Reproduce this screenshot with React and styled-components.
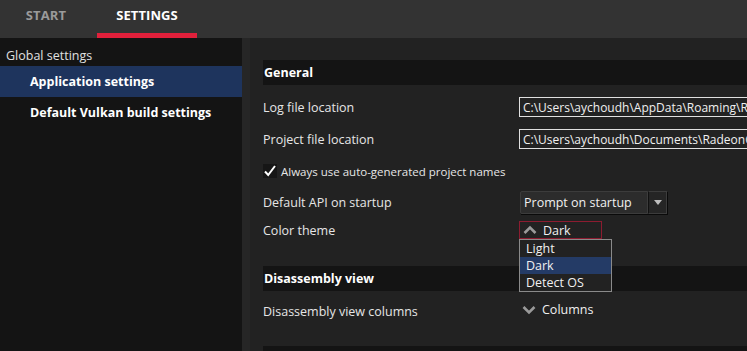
import styled, { createGlobalStyle } from "styled-components"

const GlobalStyle = createGlobalStyle`
  html, body {
    margin: 0;
    padding: 0;
    background: #141414;
    font-family: "Open Sans", "Noto Sans", sans-serif;
    color: #e6e6e6;
  }
`

const sidebarItems = [
  { label: "Global settings", level: 0 },
  { label: "Application settings", level: 1, active: true },
  { label: "Default Vulkan build settings", level: 1 },
]

const themes = ["Light", "Dark", "Detect OS"]

function Check() {
  return (
    <svg width="14" height="14" viewBox="0 0 14 14">
      <path d="M2 7.5 L5.2 11 L12 2" fill="none" stroke="#fff" strokeWidth="2" />
    </svg>
  )
}

function Chevron({ up }) {
  return (
    <svg width="14" height="10" viewBox="0 0 14 10">
      <path
        d={up ? "M1.5 8 L7 2.5 L12.5 8" : "M1.5 2 L7 7.5 L12.5 2"}
        fill="none"
        stroke="#9a9a9a"
        strokeWidth="2.6"
      />
    </svg>
  )
}

export default function App() {
  return (
    <Page>
      <GlobalStyle />
      <TabBar>
        <Tab>START</Tab>
        <Tab active>SETTINGS</Tab>
      </TabBar>

      <Body>
        <Sidebar>
          {sidebarItems.map((item) => (
            <SideItem key={item.label} level={item.level} active={item.active}>
              {item.label}
            </SideItem>
          ))}
        </Sidebar>
        <Splitter />

        <Main>
          <SectionHeader>General</SectionHeader>
          <Row height={32} first>
            <Label>Log file location</Label>
            <PathInput>C:\Users\aychoudh\AppData\Roaming\RadeonGPUAnalyzer</PathInput>
          </Row>
          <Row height={32}>
            <Label>Project file location</Label>
            <PathInput>C:\Users\aychoudh\Documents\RadeonGPUAnalyzer\Projects</PathInput>
          </Row>
          <Row height={32}>
            <CheckBox>
              <Check />
            </CheckBox>
            <SmallLabel>Always use auto-generated project names</SmallLabel>
          </Row>
          <Row height={30}>
            <Label>Default API on startup</Label>
            <Combo>
              <ComboText>Prompt on startup</ComboText>
              <ComboArrow>
                <svg width="8" height="5" viewBox="0 0 8 5">
                  <path d="M0 0 H8 L4 5 Z" fill="#bdbdbd" />
                </svg>
              </ComboArrow>
            </Combo>
          </Row>
          <Row height={26}>
            <Label>Color theme</Label>
            <ThemeWrap>
              <ThemeButton>
                <Chevron up />
                <span>Dark</span>
              </ThemeButton>
              <ThemeList>
                {themes.map((t) => (
                  <ThemeOption key={t} selected={t === "Dark"}>
                    {t}
                  </ThemeOption>
                ))}
              </ThemeList>
            </ThemeWrap>
          </Row>

          <SectionHeader gap={23}>Disassembly view</SectionHeader>
          <Row height={40}>
            <Label>Disassembly view columns</Label>
            <ColumnsToggle>
              <Chevron />
              <span>Columns</span>
            </ColumnsToggle>
          </Row>
          <SectionHeader gap={15} />
        </Main>
      </Body>
    </Page>
  )
}

const Page = styled.div`
  width: 747px;
  height: 351px;
  overflow: hidden;
  display: flex;
  flex-direction: column;
  background: #141414;
`

const TabBar = styled.div`
  height: 38px;
  flex-shrink: 0;
  background: #333333;
  display: flex;
`

const Tab = styled.div`
  width: ${(p) => (p.active ? "100px" : "92px")};
  margin-left: ${(p) => (p.active ? "5px" : "0")};
  box-sizing: border-box;
  display: flex;
  align-items: center;
  justify-content: center;
  padding-bottom: 4px;
  font-size: 13px;
  font-weight: 700;
  letter-spacing: 0.1px;
  color: ${(p) => (p.active ? "#ffffff" : "#9a9a9a")};
  border-bottom: 5px solid ${(p) => (p.active ? "#e1203b" : "transparent")};
`

const Body = styled.div`
  flex: 1;
  display: flex;
  min-height: 0;
`

const Sidebar = styled.div`
  width: 242px;
  flex-shrink: 0;
  background: #141414;
  padding-top: 6px;
  display: flex;
  flex-direction: column;
`

const SideItem = styled.div`
  height: ${(p) => (p.level === 0 ? "22px" : "31px")};
  display: flex;
  align-items: center;
  padding-left: ${(p) => (p.level === 0 ? "6px" : "30px")};
  font-size: 12.5px;
  font-weight: ${(p) => (p.level === 0 ? 400 : 700)};
  color: ${(p) => (p.level === 0 ? "#e0e0e0" : "#ffffff")};
  background: ${(p) => (p.active ? "#1e345d" : "transparent")};
`

const Splitter = styled.div`
  width: 8px;
  flex-shrink: 0;
  background: #262626;
`

const Main = styled.div`
  flex: 1;
  background: #222222;
  padding: 22px 0 0 13px;
  overflow: hidden;
  display: flex;
  flex-direction: column;
`

const SectionHeader = styled.div`
  height: 25px;
  flex-shrink: 0;
  margin-top: ${(p) => p.gap || 0}px;
  background: #141414;
  display: flex;
  align-items: center;
  padding-left: 1px;
  font-size: 12.5px;
  font-weight: 700;
  color: #ffffff;
`

const Row = styled.div`
  height: ${(p) => p.height}px;
  margin-top: ${(p) => (p.first ? "6px" : "0")};
  flex-shrink: 0;
  display: flex;
  align-items: center;
`

const Label = styled.div`
  width: 256px;
  flex-shrink: 0;
  font-size: 12.5px;
  color: #e6e6e6;
`

const SmallLabel = styled.div`
  font-size: 11.5px;
  color: #e6e6e6;
  margin-left: 4px;
`

const CheckBox = styled.div`
  width: 14px;
  height: 14px;
  display: flex;
  align-items: center;
  justify-content: center;
  background: #161616;
`

const PathInput = styled.div`
  width: 228px;
  height: 20px;
  flex-shrink: 0;
  box-sizing: border-box;
  border: 1px solid #e0e0e0;
  border-right: none;
  padding: 0 3px;
  display: flex;
  align-items: center;
  font-size: 12px;
  color: #f0f0f0;
  white-space: nowrap;
  overflow: hidden;
`

const Combo = styled.div`
  margin-left: 1px;
  height: 23px;
  display: flex;
  box-shadow: 1px 1px 0 #0a0a0a;
`

const ComboText = styled.div`
  width: 128px;
  box-sizing: border-box;
  background: #2c2c2c;
  border: 1px solid #3c3c3c;
  border-radius: 2px 0 0 2px;
  padding-left: 3px;
  display: flex;
  align-items: center;
  font-size: 12.5px;
  color: #f0f0f0;
`

const ComboArrow = styled.div`
  width: 19px;
  box-sizing: border-box;
  background: #252525;
  border: 1px solid #3c3c3c;
  border-left: 1px solid #111;
  display: flex;
  align-items: center;
  justify-content: center;
`

const ThemeWrap = styled.div`
  position: relative;
`

const ThemeButton = styled.div`
  width: 83px;
  height: 18px;
  box-sizing: border-box;
  border: 1px solid #8c1c30;
  display: flex;
  align-items: center;
  gap: 6px;
  padding-left: 3px;
  font-size: 12.5px;
  color: #f0f0f0;
`

const ThemeList = styled.div`
  position: absolute;
  top: 18px;
  left: 0;
  width: 93px;
  box-sizing: border-box;
  border: 1px solid #8a8a8a;
  background: #222222;
  z-index: 2;
`

const ThemeOption = styled.div`
  height: 17px;
  display: flex;
  align-items: center;
  padding-left: 6px;
  font-size: 12.5px;
  color: #f0f0f0;
  background: ${(p) => (p.selected ? "#243b66" : "transparent")};
`

const ColumnsToggle = styled.div`
  display: flex;
  align-items: center;
  gap: 6px;
  padding-left: 3px;
  margin-top: -3px;
  font-size: 12.5px;
  color: #f0f0f0;
`
